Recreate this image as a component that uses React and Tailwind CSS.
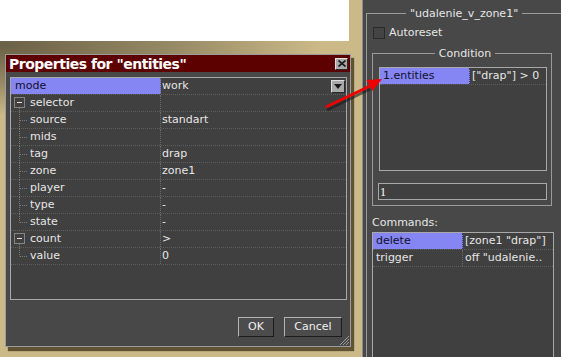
const props = [
  { name: "mode", value: "work", kind: "top", selected: true },
  { name: "selector", kind: "box" },
  { name: "source", value: "standart", kind: "child" },
  { name: "mids", kind: "child" },
  { name: "tag", value: "drap", kind: "child" },
  { name: "zone", value: "zone1", kind: "child" },
  { name: "player", value: "-", kind: "child" },
  { name: "type", value: "-", kind: "child" },
  { name: "state", value: "-", kind: "last" },
  { name: "count", value: ">", kind: "box" },
  { name: "value", value: "0", kind: "last" },
];

function TreeMark({ kind }) {
  if (kind === "box") {
    return (
      <svg width="18" height="17" className="shrink-0">
        <rect x="3.5" y="2.5" width="10" height="10" fill="none" stroke="#c8c8c8" strokeDasharray="1 1" />
        <line x1="6" y1="7.5" x2="11" y2="7.5" stroke="#e0e0e0" />
        <line x1="8.5" y1="13" x2="8.5" y2="17" stroke="#7a7a7a" strokeDasharray="1 1" />
      </svg>
    );
  }
  return (
    <svg width="18" height="17" className="shrink-0">
      <line x1="8.5" y1="0" x2="8.5" y2={kind === "last" ? 8.5 : 17} stroke="#7a7a7a" strokeDasharray="1 1" />
      <line x1="9" y1="8.5" x2="16" y2="8.5" stroke="#7a7a7a" strokeDasharray="1 1" />
    </svg>
  );
}

function PropRow({ row }) {
  return (
    <div className="flex h-[17px] border-b border-dotted border-[#5e5e5e]">
      <div
        className={`w-[150px] shrink-0 flex items-center border-r border-dotted border-[#6a6a6a] ${
          row.selected ? "bg-[#8585f4] text-[#10102a]" : "text-[#e6e6e6]"
        }`}
      >
        {row.kind === "top" ? <span className="pl-[4px]">{row.name}</span> : (
          <>
            <TreeMark kind={row.kind} />
            <span className="pl-[1px]">{row.name}</span>
          </>
        )}
      </div>
      <div className="flex-1 flex items-center pl-[1px] text-[#e6e6e6]">
        <span className="flex-1">{row.value}</span>
        {row.selected && (
          <div className="w-[14px] h-[13px] mr-[1px] bg-[#a9a9a9] border-t border-l border-[#dcdcdc] border-b border-r border-b-[#2a2a2a] border-r-[#2a2a2a] flex items-center justify-center">
            <svg width="8" height="5">
              <polygon points="0,0 8,0 4,5" fill="#1a1a1a" />
            </svg>
          </div>
        )}
      </div>
    </div>
  );
}

function Button({ children, className }) {
  return (
    <button
      className={`h-[20px] bg-[#4c4c4c] text-[#f0f0f0] border border-t-[#b4b4b4] border-l-[#b4b4b4] border-b-[#1c1c1c] border-r-[#1c1c1c] ${className}`}
    >
      {children}
    </button>
  );
}

function Dialog() {
  return (
    <div className="relative ml-[5px] mt-[13px] w-[346px] h-[293px] bg-[#484848] border border-[#9c9c9c] flex flex-col shadow-[3px_4px_1px_rgba(60,50,25,0.75)]">
      <div className="h-[17px] bg-[#5c0000] flex items-center justify-between pl-[3px] pr-[2px]">
        <span className="text-white font-bold text-[14px] tracking-[-0.5px] leading-none">
          Properties for "entities"
        </span>
        <div className="w-[13px] h-[12px] bg-[#aaaaaa] border-t border-l border-[#e0e0e0] border-b border-r border-b-[#2a2a2a] border-r-[#2a2a2a] flex items-center justify-center">
          <svg width="8" height="7">
            <path d="M0.5 0.5 L7.5 6.5 M7.5 0.5 L0.5 6.5" stroke="#1a1a1a" strokeWidth="1.6" />
          </svg>
        </div>
      </div>
      <div className="ml-[4px] mt-[5px] w-[337px] h-[223px] bg-[#404040] border border-[#a8a8a8]">
        {props.map((row) => (
          <PropRow key={row.name} row={row} />
        ))}
      </div>
      <div className="flex justify-end gap-[10px] pr-[8px] mt-[17px]">
        <Button className="w-[36px]">OK</Button>
        <Button className="w-[58px]">Cancel</Button>
      </div>
      <svg width="12" height="12" className="absolute right-0 bottom-0">
        <path d="M11 2 L2 11 M11 5 L5 11 M11 8 L8 11" stroke="#9a9a9a" />
      </svg>
    </div>
  );
}

function ListRow({ label, value, selected }) {
  return (
    <div className="flex h-[17px] border-b border-dotted border-[#5e5e5e]">
      <div
        className={`w-[90px] shrink-0 flex items-center pl-[3px] ${
          selected ? "bg-[#8585f4] text-[#10102a] border-r border-dotted border-[#3a3a7a]" : "text-[#e6e6e6] border-r border-dotted border-[#6a6a6a]"
        }`}
      >
        {label}
      </div>
      <div className="flex-1 flex items-center pl-[2px] text-[#e6e6e6] whitespace-nowrap overflow-hidden">{value}</div>
    </div>
  );
}

function RightPanel() {
  return (
    <div className="flex-1 bg-[#484848] border-l border-[#8c8c8c] pl-[3px] text-[#e6e6e6]">
      <fieldset className="mt-[7px] w-[200px] h-[400px] border border-[#9a9a9a] pl-[5px]">
        <legend className="ml-[34px] px-[4px] leading-[13px]">"udalenie_v_zone1"</legend>
        <div className="flex items-center mt-[7px] ml-[1px] h-[12px]">
          <div className="w-[12px] h-[12px] border border-[#2a2a2a] bg-[#444444]" />
          <span className="ml-[4px]">Autoreset</span>
        </div>
        <fieldset className="mt-[8px] w-[180px] border border-[#9a9a9a] pl-[6px] pb-[5px]">
          <legend className="mx-auto px-[4px] leading-[13px]">Condition</legend>
          <div className="mt-[7px] w-[168px] h-[104px] bg-[#404040] border border-[#a8a8a8]">
            <ListRow label="1.entities" value={'["drap"] > 0'} selected />
          </div>
          <div className="mt-[12px] -ml-[1px] w-[169px] h-[17px] bg-[#404040] border border-[#a8a8a8] flex items-center pl-[1px] text-white font-['Liberation_Serif',serif] text-[12px]">
            1
          </div>
        </fieldset>
        <div className="mt-[10px] leading-[13px]">Commands:</div>
        <div className="mt-[3px] w-[182px] h-[140px] bg-[#404040] border border-[#a8a8a8]">
          <ListRow label="delete" value={'[zone1 "drap"]'} selected />
          <ListRow label="trigger" value={'off "udalenie..'} />
        </div>
      </fieldset>
    </div>
  );
}

export default function App() {
  return (
    <div className="relative w-[561px] h-[357px] overflow-hidden flex font-['DejaVu_Sans',sans-serif] text-[11px] bg-[#cfbe8e] bg-[radial-gradient(ellipse_320px_70px_at_0_45px,#6a6045,#978a66_55%,#cbb987)]">
      <div className="w-[362px] shrink-0 flex flex-col">
        <div className="w-[349px] h-[41px] bg-white" />
        <Dialog />
      </div>
      <RightPanel />
      <svg width="561" height="357" className="absolute left-0 top-0 pointer-events-none">
        <line x1="327" y1="110" x2="370" y2="89" stroke="#1a1a1a" strokeOpacity="0.6" strokeWidth="3" />
        <line x1="326" y1="107" x2="370" y2="86" stroke="#f00000" strokeWidth="3" />
        <polygon points="382,79 366.5,80 372.5,91" fill="#f00000" />
      </svg>
    </div>
  );
}
